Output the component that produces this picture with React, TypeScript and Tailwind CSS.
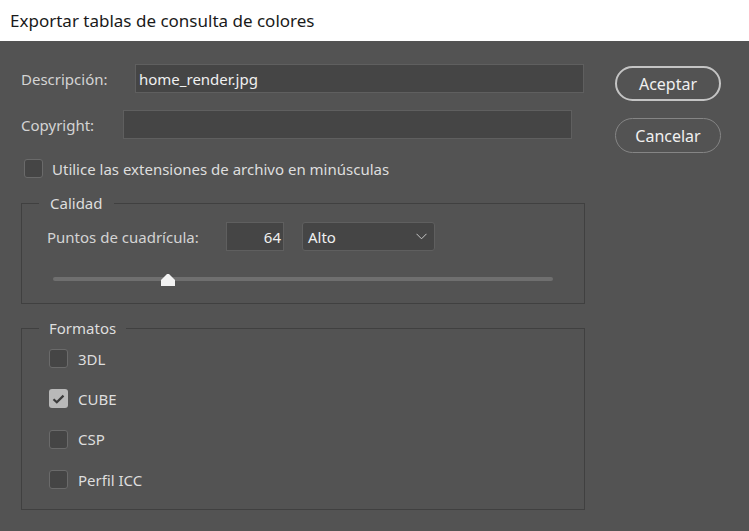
import React from 'react';

// Photoshop-style "Exportar tablas de consulta de colores" dialog

const font = { fontFamily: '"Noto Sans", "Open Sans", sans-serif' };

function Box({ checked = false }: { checked?: boolean }) {
  if (checked) {
    return (
      <span className="flex h-[19px] w-[19px] shrink-0 items-center justify-center rounded-[3px] bg-[#b9b9b9]">
        <svg width="13" height="10" viewBox="0 0 13 10" fill="none">
          <path d="M1.5 5.2 L4.8 8.3 L11.5 1.6" stroke="#3c3c3c" strokeWidth="2.2" />
        </svg>
      </span>
    );
  }
  return (
    <span className="h-[19px] w-[19px] shrink-0 rounded-[3px] border border-[#6a6a6a] bg-[#454545]" />
  );
}

function FormatRow({ label, checked }: { label: string; checked?: boolean }) {
  return (
    <label className="flex h-[19px] items-center gap-[10px] text-[#dedede]">
      <Box checked={checked} />
      <span>{label}</span>
    </label>
  );
}

export default function App() {
  return (
    <div className="h-[531px] w-[749px] overflow-hidden bg-[#535353] text-[15px] leading-[22px]" style={font}>
      {/* Title bar */}
      <div className="flex h-[41px] items-center bg-white pl-[10px] text-[17px] text-[#1a1a1a]">
        Exportar tablas de consulta de colores
      </div>

      <div className="flex">
        {/* Left column */}
        <div className="ml-[21px] w-[564px] pt-[23px]">
          <div className="flex items-center">
            <span className="w-[114px] text-[#d4d4d4]">Descripción:</span>
            <div className="flex h-[29px] w-[449px] items-center border border-[#5f5f5f] bg-[#454545] px-[3px] text-[#f0f0f0]">
              home_render.jpg
            </div>
          </div>

          <div className="mt-[17px] flex items-center">
            <span className="w-[102px] text-[#d4d4d4]">Copyright:</span>
            <div className="h-[29px] w-[449px] border border-[#5f5f5f] bg-[#454545]" />
          </div>

          <label className="mt-[20px] ml-[3px] flex h-[19px] items-center gap-[9px] text-[#dedede]">
            <Box />
            <span>Utilice las extensiones de archivo en minúsculas</span>
          </label>

          {/* Calidad */}
          <fieldset className="mt-[14px] border border-[#404040] pb-[17px] pl-[25px]">
            <legend className="-ml-[8px] px-[11px] text-[#dedede]">Calidad</legend>
            <div className="mt-[8px] flex items-center">
              <span className="w-[179px] text-[#d4d4d4]">Puntos de cuadrícula:</span>
              <div className="flex h-[29px] w-[58px] items-center justify-end border border-[#5f5f5f] bg-[#454545] pr-[2px] text-[#f0f0f0]">
                64
              </div>
              <div className="ml-[18px] flex h-[29px] w-[133px] items-center justify-between rounded-[3px] border border-[#5f5f5f] bg-[#454545] pl-[5px] pr-[7px] text-[#f0f0f0]">
                <span>Alto</span>
                <svg width="11" height="7" viewBox="0 0 11 7" fill="none">
                  <path d="M0.5 0.8 L5.5 5.8 L10.5 0.8" stroke="#c8c8c8" strokeWidth="1" />
                </svg>
              </div>
            </div>
            <div className="relative mt-[23px] ml-[6px] h-[12px] w-[500px]">
              <div className="absolute left-0 right-0 top-[3px] h-[4px] rounded-full bg-[#6f6f6f]" />
              <svg className="absolute top-0" style={{ left: '21.6%' }} width="14" height="12" viewBox="0 0 14 12">
                <polygon points="6,0 8,0 14,6 14,12 0,12 0,6" fill="#f2f2f2" />
              </svg>
            </div>
          </fieldset>

          {/* Formatos */}
          <fieldset className="mt-[13px] border border-[#404040] pb-[20px] pl-[27px]">
            <legend className="-ml-[10px] px-[10px] text-[#dedede]">Formatos</legend>
            <div className="mt-[10px] flex flex-col gap-[21.4px]">
              <FormatRow label="3DL" />
              <FormatRow label="CUBE" checked />
              <FormatRow label="CSP" />
              <FormatRow label="Perfil ICC" />
            </div>
          </fieldset>
        </div>

        {/* Buttons */}
        <div className="ml-[30px] flex flex-col gap-[17px] pt-[25px]">
          <button className="h-[35px] w-[106px] rounded-full border-2 border-[#c4c4c4] text-[16px] text-[#f0f0f0]">
            Aceptar
          </button>
          <button className="h-[35px] w-[106px] rounded-full border border-[#858585] text-[16px] text-[#f0f0f0]">
            Cancelar
          </button>
        </div>
      </div>
    </div>
  );
}
